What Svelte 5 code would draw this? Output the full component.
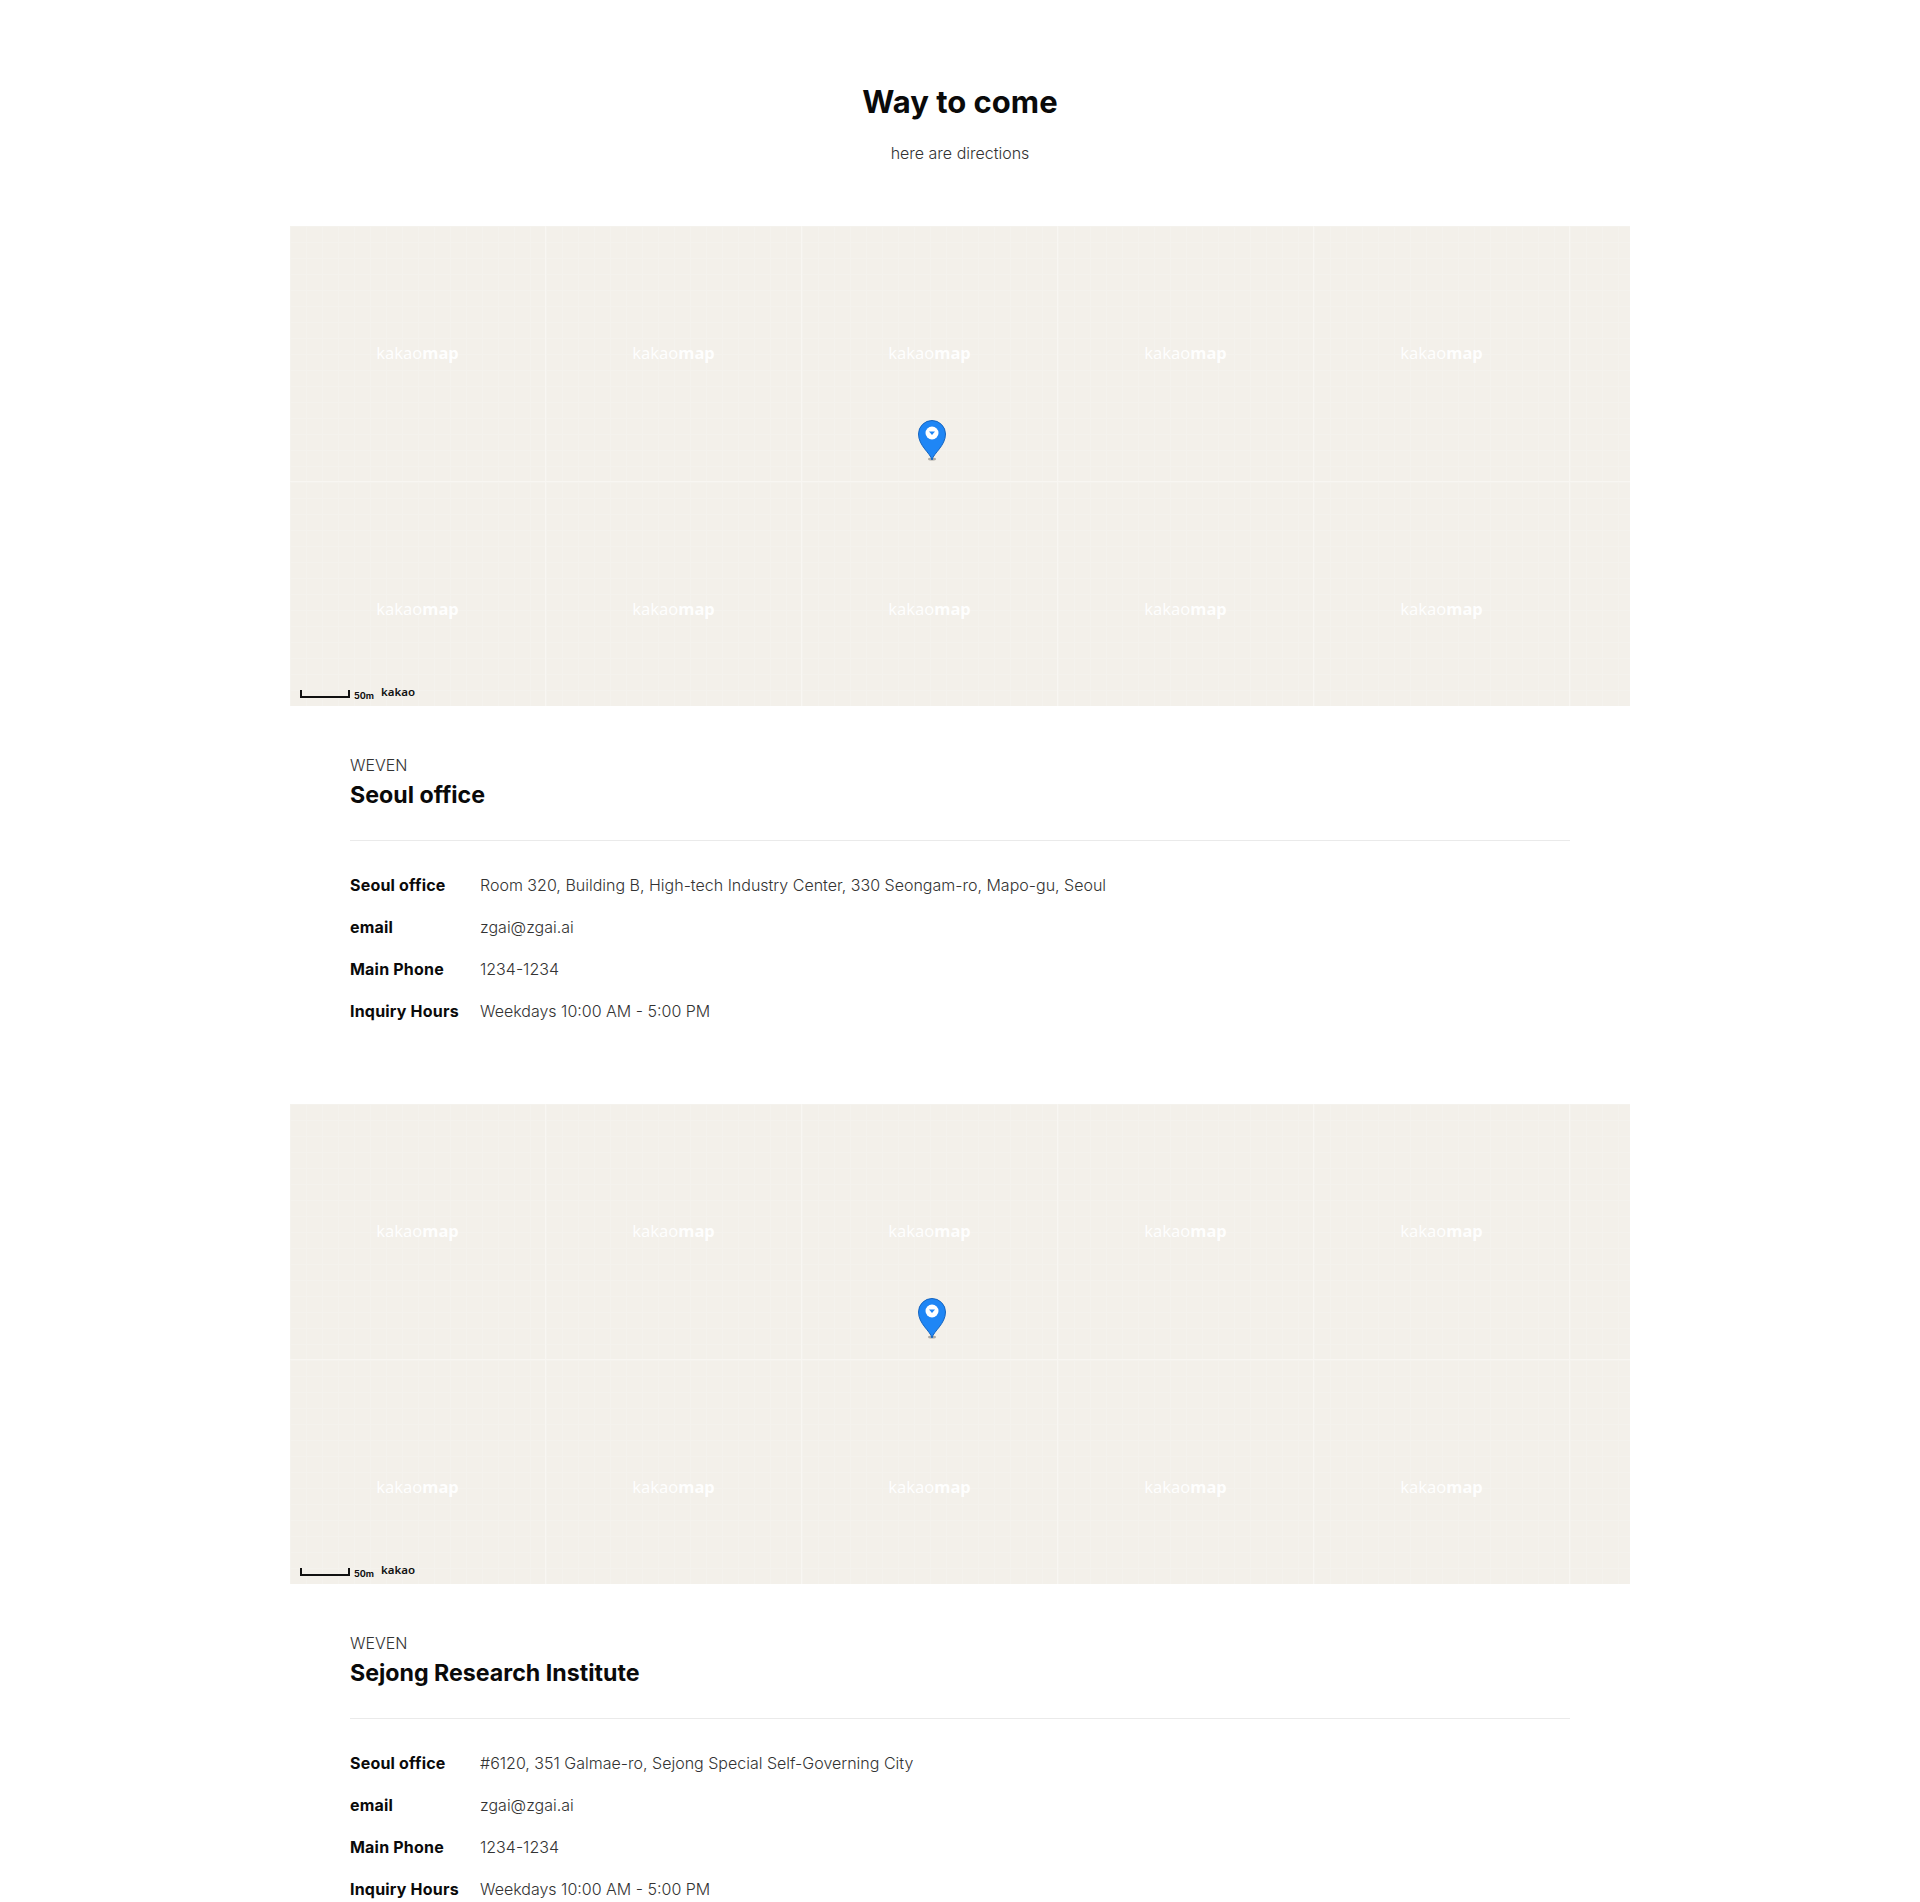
<script>
	const tiles = Array.from({ length: 18 });

	const offices = [
		{
			name: 'Seoul office',
			address: 'Room 320, Building B, High-tech Industry Center, 330 Seongam-ro, Mapo-gu, Seoul'
		},
		{
			name: 'Sejong Research Institute',
			address: '#6120, 351 Galmae-ro, Sejong Special Self-Governing City'
		}
	];
</script>

<div class="page">
	<header class="head">
		<h1>Way to come</h1>
		<p>here are directions</p>
	</header>

	{#each offices as office}
		<section class="office">
			<div class="map">
				<div class="tiles">
					{#each tiles as _, i}
						<div class="tile">
							{#if i < 5 || (i >= 6 && i < 11)}
								<span class="mark">kakao<b>map</b></span>
							{/if}
						</div>
					{/each}
				</div>
				<svg class="pin" width="30" height="42" viewBox="0 0 30 42" aria-hidden="true">
					<ellipse cx="15" cy="40" rx="4" ry="1.5" fill="#8f8d88" opacity="0.7" />
					<path d="M15 41C13.5 34 1.5 27 1.5 15a13.5 13.5 0 0 1 27 0C28.500 27 16.500 34 15 41Z" fill="#1f86f5" stroke="#1565c0" stroke-width="1" />
					<circle cx="15" cy="14" r="6.500" fill="#fff" />
					<path d="M12 12.500h6L15 16Z" fill="#1f86f5" />
				</svg>
				<div class="scale">
					<span class="bar"></span>
					<span class="dist">50m</span>
					<span class="brand">kakao</span>
				</div>
			</div>

			<div class="info">
				<span class="company">WEVEN</span>
				<h2>{office.name}</h2>
				<hr />
				<dl>
					<dt>Seoul office</dt>
					<dd>{office.address}</dd>
					<dt>email</dt>
					<dd>zgai@zgai.ai</dd>
					<dt>Main Phone</dt>
					<dd>1234-1234</dd>
					<dt>Inquiry Hours</dt>
					<dd>Weekdays 10:00 AM - 5:00 PM</dd>
				</dl>
			</div>
		</section>
	{/each}
</div>

<style>
	:global(body) {
		margin: 0;
		background: #fff;
	}

	.page {
		width: 1340px;
		margin: 0 auto;
		padding-top: 80px;
		font-family: Inter, 'Noto Sans', sans-serif;
		color: #0a0a0a;
		height: 1822px;
		overflow: hidden;
	}

	.head {
		text-align: center;
		margin-bottom: 61px;
	}

	.head h1 {
		margin: 0;
		font-size: 31px;
		line-height: 44px;
		font-weight: 700;
	}

	.head p {
		margin: 17px 0 0;
		font-size: 16px;
		line-height: 24px;
		font-weight: 300;
		color: #333;
	}

	.office {
		margin-bottom: 81px;
	}

	.map {
		position: relative;
		height: 480px;
		overflow: hidden;
		background: #f3f0ea;
	}

	.tiles {
		display: grid;
		grid-template-columns: repeat(6, 256px);
		margin: -1px 0 0 -1px;
	}

	.tile {
		height: 256px;
		display: flex;
		align-items: center;
		justify-content: center;
		box-sizing: border-box;
		border-left: 1px solid #f8f6f2;
		border-top: 1px solid #f8f6f2;
		background-image:
			linear-gradient(to right, #f4f2ed 1px, transparent 1px),
			linear-gradient(to bottom, #f4f2ed 1px, transparent 1px);
		background-size: 16px 16px;
	}

	.mark {
		font-family: 'Noto Sans', sans-serif;
		font-size: 16.500px;
		line-height: 20px;
		color: #fff;
		opacity: 0.95;
		margin-top: -1px;
	}

	.mark b {
		font-weight: 700;
	}

	.pin {
		position: absolute;
		left: 627px;
		top: 193px;
	}

	.scale {
		position: absolute;
		left: 10px;
		bottom: 5px;
		display: flex;
		align-items: flex-end;
		color: #111;
	}

	.bar {
		width: 46px;
		height: 6px;
		margin-bottom: 3px;
		border: 2px solid #111;
		border-top: 0;
	}

	.dist {
		margin-left: 4px;
		font-size: 9px;
		font-weight: 700;
		line-height: 11px;
	}

	.brand {
		margin-left: 7px;
		margin-bottom: 1px;
		font-family: 'Noto Sans', sans-serif;
		font-size: 11.500px;
		font-weight: 600;
		line-height: 16px;
	}

	.info {
		padding: 47px 60px 0;
	}

	.company {
		display: block;
		font-size: 16px;
		line-height: 24px;
		font-weight: 300;
		color: #333;
	}

	.info h2 {
		margin: 1px 0 0;
		font-size: 23.200px;
		line-height: 34px;
		font-weight: 700;
	}

	hr {
		margin: 28px 0 32px;
		border: 0;
		border-top: 1px solid #eaeaea;
	}

	dl {
		display: grid;
		grid-template-columns: 130px 1fr;
		row-gap: 18px;
		margin: 0;
		font-size: 16px;
		line-height: 24px;
	}

	dt {
		font-weight: 700;
		letter-spacing: 0.2px;
	}

	dd {
		margin: 0;
		font-weight: 300;
		color: #333;
	}
</style>
